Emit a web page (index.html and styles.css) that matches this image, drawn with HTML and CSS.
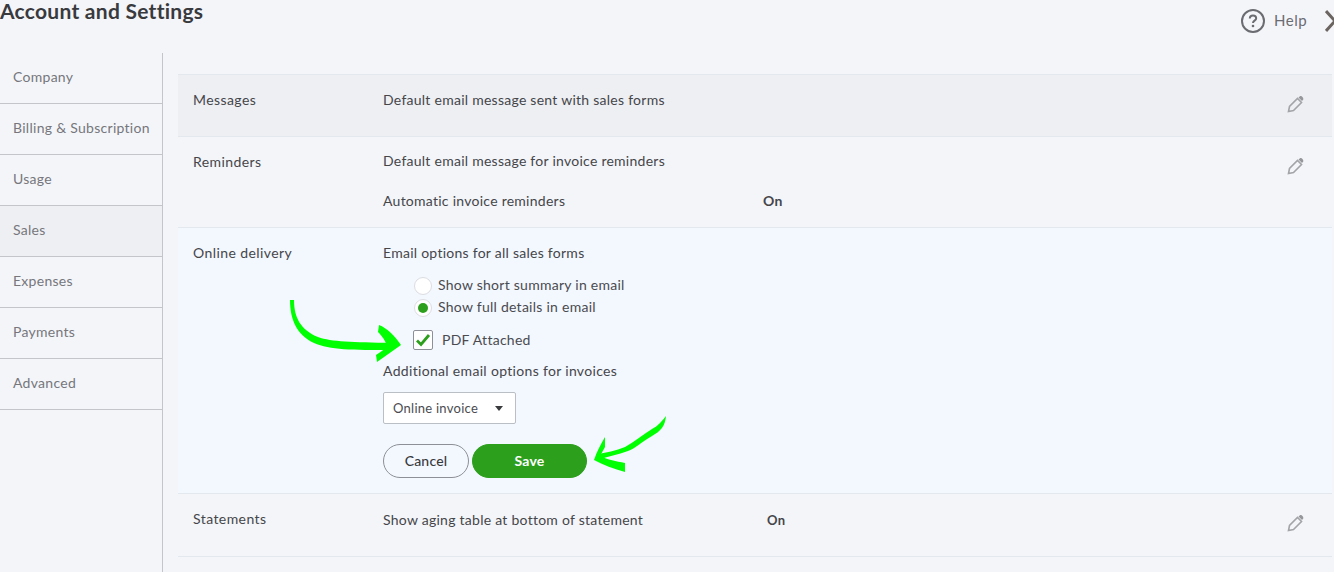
FILE: index.html
```html
<!DOCTYPE html>
<html lang="en">
<head>
<meta charset="utf-8">
<title>Account and Settings</title>
<link rel="stylesheet" href="styles.css">
</head>
<body>
<div class="page">
  <header class="topbar">
    <h1 class="title">Account and Settings</h1>
    <div class="top-actions">
      <svg class="help-icon" width="26" height="26" viewBox="0 0 26 26"><circle cx="13" cy="13" r="11" fill="none" stroke="#6b6c72" stroke-width="2"/><path d="M9.8 10.4c0-1.9 1.4-3 3.2-3s3.2 1.1 3.2 2.8c0 2.400-3.200 2.500-3.200 4.800" fill="none" stroke="#6b6c72" stroke-width="2"/><circle cx="13" cy="18" r="1.300" fill="#6b6c72"/></svg>
      <span class="help-text">Help</span>
      <svg class="close-icon" width="9" height="24" viewBox="0 0 9 24"><path d="M1 2 L10 12 L1 22" fill="none" stroke="#6b6460" stroke-width="3"/></svg>
    </div>
  </header>
  <div class="content">
    <nav class="sidebar">
      <a class="nav-item">Company</a>
      <a class="nav-item">Billing &amp; Subscription</a>
      <a class="nav-item">Usage</a>
      <a class="nav-item active">Sales</a>
      <a class="nav-item">Expenses</a>
      <a class="nav-item">Payments</a>
      <a class="nav-item">Advanced</a>
    </nav>
    <main class="main">
      <section class="row row-messages">
        <div class="label">Messages</div>
        <div class="body"><div class="line">Default email message sent with sales forms</div></div>
        <svg class="pencil" width="18" height="18" viewBox="0 0 18 18"><use href="#pencil-shape"/></svg>
      </section>
      <section class="row row-reminders">
        <div class="label">Reminders</div>
        <div class="body">
          <div class="line">Default email message for invoice reminders</div>
          <div class="line line-value line-auto"><span class="line-name">Automatic invoice reminders</span><b class="value">On</b></div>
        </div>
        <svg class="pencil" width="18" height="18" viewBox="0 0 18 18"><use href="#pencil-shape"/></svg>
      </section>
      <section class="row row-online">
        <div class="label">Online delivery</div>
        <div class="body">
          <div class="line">Email options for all sales forms</div>
          <div class="radios">
            <div class="radio-row"><span class="radio"></span><span class="option-text">Show short summary in email</span></div>
            <div class="radio-row"><span class="radio checked"></span><span class="option-text">Show full details in email</span></div>
          </div>
          <div class="check-row">
            <span class="checkbox"><svg width="16" height="14" viewBox="0 0 16 14"><path d="M2 7.500 L6 11.500 L14 2" fill="none" stroke="#2ca01c" stroke-width="2.800"/></svg></span>
            <span class="option-text">PDF Attached</span>
          </div>
          <div class="line line-extra">Additional email options for invoices</div>
          <div class="select"><span>Online invoice</span><i class="caret"></i></div>
          <div class="buttons">
            <button class="btn btn-cancel">Cancel</button>
            <button class="btn btn-save">Save</button>
          </div>
        </div>
      </section>
      <section class="row row-statements">
        <div class="label">Statements</div>
        <div class="body"><div class="line line-value"><span class="line-name">Show aging table at bottom of statement</span><b class="value value-small">On</b></div></div>
        <svg class="pencil" width="18" height="18" viewBox="0 0 18 18"><use href="#pencil-shape"/></svg>
      </section>
    </main>
  </div>
  <svg class="annotations" width="1334" height="572" viewBox="0 0 1334 572">
    <path d="M290 300 L294 300 C294 318 301 330 318 337 C332 342 352 342 392 343 L392 350 C352 350 330 350 314 343 C297 335 290 320 290 300 Z" fill="#00ff00"/>
    <path d="M379 325 C387 328 395 336 401 345 C393 351 385 356 377 362 L376 355 C380 352 384 350 387 347 C386 341 382 336 378 332 Z" fill="#00ff00"/>
    <path d="M666 416 C665 426 661 431 652 436 C642 442 634 449 628 451 C618 455 608 456 598 460 L596 455 C606 452 616 451 625 447 C634 442 642 435 652 429 C658 426 662 421 666 416 Z" fill="#00ff00"/>
    <path d="M605 437 L605 447 L600 456 C608 460 616 461 625 463 L625 472 C614 469 603 465 594 460 C597 451 601 444 605 437 Z" fill="#00ff00"/>
  </svg>
  <svg class="defs" width="0" height="0"><defs><g id="pencil-shape"><path d="M1.500 16.500 L2.500 11.500 L10.500 3.500 L14.500 7.500 L6.500 15.500 Z" fill="none" stroke="#a3a4a8" stroke-width="1.600"/><path d="M11.500 2.500 L13 1.200 C14.500 .6 16.800 2.800 16.200 4.500 L15 6 Z" fill="#96979b"/></g></defs></svg>
</div>
</body>
</html>
```
FILE: styles.css
```css
* { box-sizing: border-box; }
html, body { margin: 0; padding: 0; }
body {
  width: 1334px;
  height: 572px;
  overflow: hidden;
  background: #f4f5f9;
  font-family: "Lato", "Liberation Sans", sans-serif;
  font-size: 14px;
  color: #45464a;
}
.page { position: relative; width: 1334px; height: 572px; overflow: hidden; }
.topbar { height: 53px; display: flex; justify-content: space-between; align-items: flex-start; }
.title { margin: 0; font-size: 21px; line-height: 22px; font-weight: 700; color: #393a3d; letter-spacing: .27px; }
.top-actions { display: flex; align-items: center; margin-top: 8px; height: 26px; }
.help-icon { margin-right: 8px; }
.help-text { font-size: 15px; color: #6b6c72; width: 50px; letter-spacing: .5px; margin-top: -2px; }
.close-icon { display: block; margin-left: 1px; }
.content { display: flex; height: 519px; }
.sidebar { width: 163px; flex: none; border-right: 1px solid #c4c5ca; }
.nav-item { display: flex; align-items: center; height: 51px; padding-left: 13px; padding-bottom: 3px; border-bottom: 1px solid #c4c5ca; color: #76777c; font-size: 14px; letter-spacing: .28px; }
.nav-item.active { background: #eeeff3; }
.main { margin-left: 15px; width: 1154px; padding-top: 21px; }
.row { display: flex; position: relative; border-bottom: 1px solid #e3e7ee; padding-left: 15px; letter-spacing: .26px; }
.label { width: 190px; flex: none; letter-spacing: .42px; }
.body { flex: 1; }
.line { line-height: 20px; }
.line-extra { letter-spacing: .32px; }
.row-messages { height: 63px; padding-top: 16px; background: #eeeff3; border-top: 1px solid #e3e7ee; }
.row-messages .body, .row-reminders .body, .row-online .body { margin-top: -1px; }
.row-reminders { height: 91px; padding-top: 15px; }
.row-reminders .label { margin-top: 1px; }
.row-online { height: 266px; padding-top: 16px; background: #f3f7fe; }
.row-statements { height: 63px; padding-top: 16px; }
.pencil { position: absolute; right: 27px; top: 20px; }
.line-value { display: flex; }
.line-name { width: 380px; flex: none; }
.line-auto { margin-top: 20px; }
.value { font-weight: 700; font-size: 14px; }
.value-small { font-size: 13px; margin-left: 4px; }
.radios { margin-top: 12px; margin-left: 31px; }
.radio-row { display: flex; align-items: center; height: 22px; gap: 6px; color: #4a4b50; }
.option-text { padding-bottom: 4px; }
.radio { width: 18px; height: 18px; border-radius: 50%; background: #fff; border: 1px solid #dcdde1; display: flex; align-items: center; justify-content: center; }
.radio.checked::after { content: ""; width: 10px; height: 10px; border-radius: 50%; background: #2ca01c; }
.check-row { display: flex; align-items: center; height: 22px; margin-top: 10px; margin-left: 30px; gap: 9px; color: #4a4b50; }
.check-row .option-text { padding-bottom: 2px; }
.checkbox { width: 20px; height: 20px; border: 1px solid #8d9096; border-radius: 2px; background: #fff; display: flex; align-items: center; justify-content: center; }
.line-extra { margin-top: 10px; }
.select { display: flex; align-items: center; justify-content: space-between; width: 133px; height: 32px; margin-top: 11px; padding: 0 12px 0 9px; background: #fff; border: 1px solid #babec5; border-radius: 2px; font-size: 13px; color: #4a4b50; }
.caret { width: 0; height: 0; border-left: 4.500px solid transparent; border-right: 4.500px solid transparent; border-top: 5px solid #393a3d; }
.buttons { display: flex; gap: 3px; margin-top: 20px; }
.btn { height: 34px; border-radius: 17px; font-family: inherit; font-size: 14px; font-weight: 700; padding: 0 0 2px; letter-spacing: .2px; }
.btn-cancel { width: 86px; background: transparent; border: 1px solid #8d9096; color: #393a3d; font-weight: 500; }
.btn-save { width: 115px; background: #2ca01c; border: 1px solid #2ca01c; color: #fff; }
.annotations { position: absolute; left: 0; top: 0; pointer-events: none; }
.defs { position: absolute; }
```
